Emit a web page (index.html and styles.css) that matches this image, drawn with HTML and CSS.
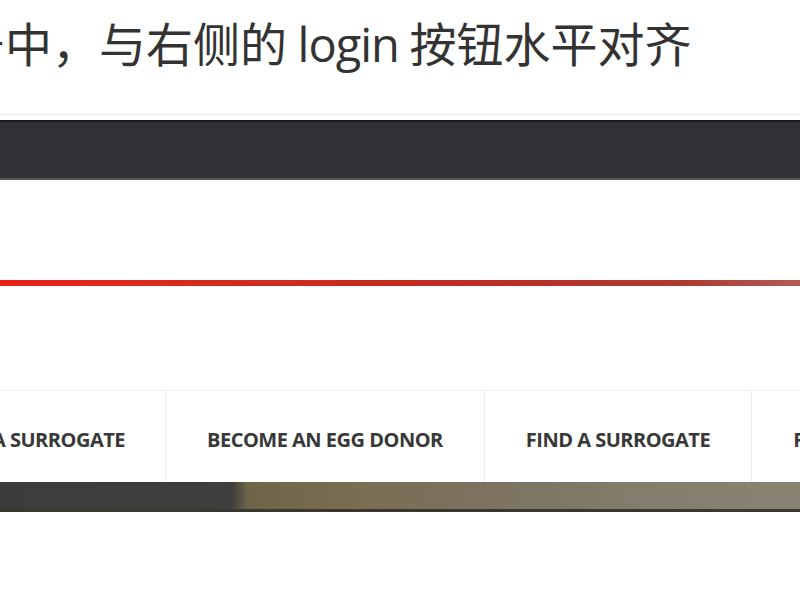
FILE: index.html
```html
<!DOCTYPE html>
<html lang="zh-CN">
<head>
<meta charset="utf-8">
<title>nav</title>
<link rel="stylesheet" href="styles.css">
</head>
<body>
<div class="caption">居中，与右侧的 <span class="latin">login</span> 按钮水平对齐</div>
<div class="rule"></div>
<div class="topbar"></div>
<div class="redzone"><div class="redline"></div></div>
<nav class="menu">
  <a class="item first"><span>BECOME A SURROGATE</span></a>
  <a class="item">BECOME AN EGG DONOR</a>
  <a class="item">FIND A SURROGATE</a>
  <a class="item">FIND AN EGG DONOR</a>
</nav>
<div class="strip"></div>
</body>
</html>
```
FILE: styles.css
```css
html, body {
  margin: 0;
  padding: 0;
  background: #ffffff;
  overflow: hidden;
  width: 800px;
  height: 600px;
}
.caption {
  height: 114px;
  box-sizing: border-box;
  padding-top: 12px;
  font-family: "Noto Sans CJK SC", "Noto Sans", sans-serif;
  font-size: 47px;
  line-height: 60px;
  color: #333333;
  white-space: nowrap;
  text-indent: -42px;
  overflow: hidden;
}
.latin {
  font-family: "Open Sans", "Noto Sans CJK SC", sans-serif;
  letter-spacing: -1px;
}
.rule {
  height: 1px;
  background: #e6e6e6;
  margin-bottom: 5px;
}
.topbar {
  height: 60px;
  box-sizing: border-box;
  background: #303135;
  border-top: 2px solid #1b1b1d;
  border-bottom: 2px solid #55565a;
}
.redzone {
  height: 210px;
  padding-top: 100px;
  box-sizing: border-box;
}
.redline {
  height: 6px;
  background: linear-gradient(90deg, #e8231a 0%, #d62a1f 25%, #bf2a22 55%, #ad3a32 85%, #b35a54 100%);
}
.menu {
  display: flex;
  height: 92px;
  box-sizing: border-box;
  border-top: 1px solid #f0f0f0;
  white-space: nowrap;
  overflow: hidden;
}
.item {
  flex: none;
  display: flex;
  align-items: center;
  justify-content: center;
  padding: 6px 41px 0;
  border-right: 1px solid #ececec;
  font-family: "Open Sans", "Liberation Sans", sans-serif;
  font-weight: 700;
  font-size: 20px;
  letter-spacing: -0.5px;
  color: #383838;
}
.item.first {
  width: 166px;
  box-sizing: border-box;
  padding: 6px 40px 0 0;
  justify-content: flex-end;
}
.strip {
  height: 30px;
  box-sizing: border-box;
  border-bottom: 3px solid #3a3630;
  background: linear-gradient(90deg, #3b3c3b 0%, #3e3f3d 29%, #6e6549 31%, #7a6e52 45%, #7b7360 60%, #847c6c 80%, #8a8374 100%);
}
```
